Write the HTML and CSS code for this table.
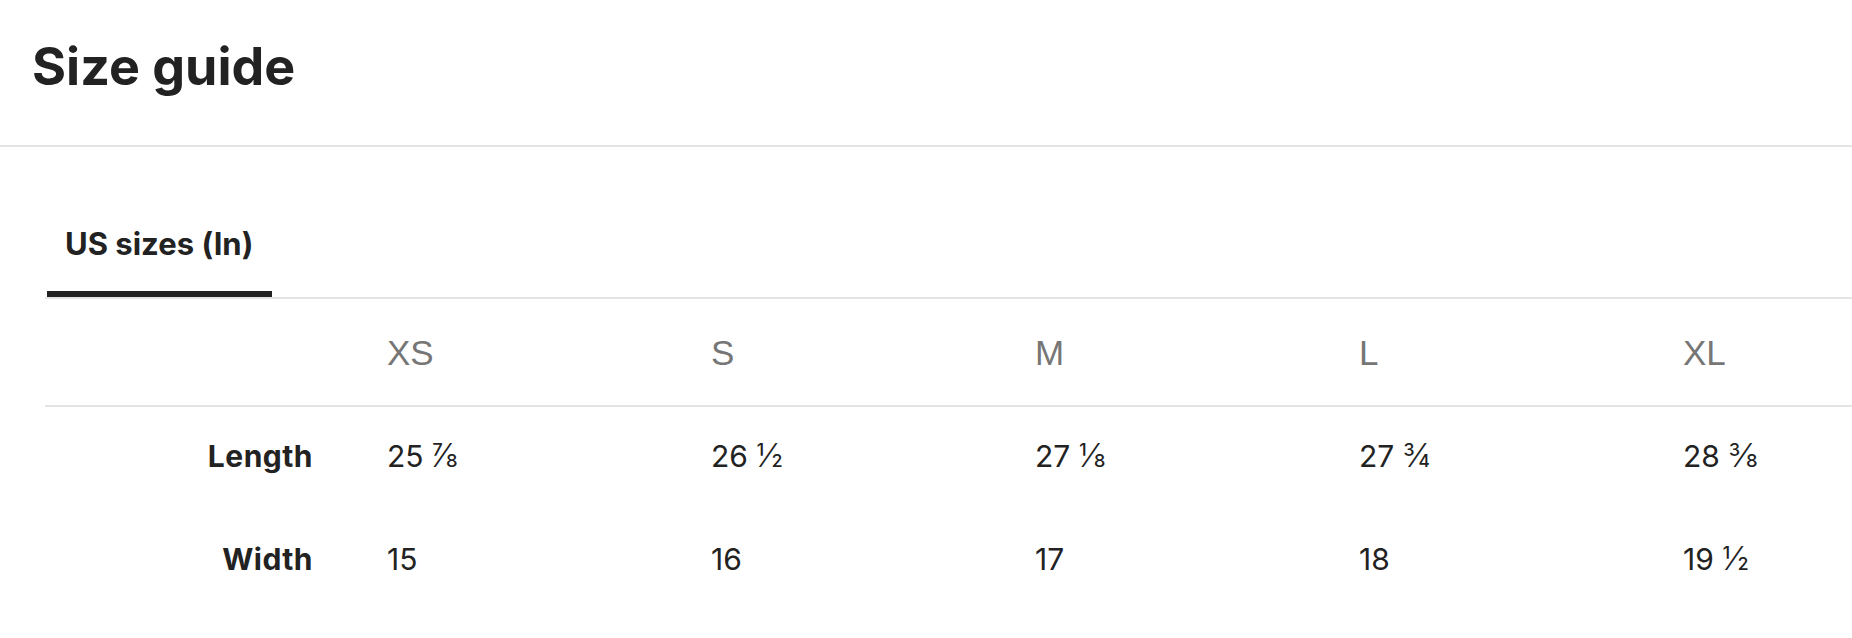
FILE: index.html
```html
<!DOCTYPE html>
<html lang="en">
<head>
<meta charset="utf-8">
<title>Size guide</title>
<link rel="stylesheet" href="styles.css">
</head>
<body>
<header class="guide-header">
  <h1 class="guide-title">Size guide</h1>
</header>
<section class="guide-body">
  <div class="tabs">
    <div class="tab tab-active">US sizes (In)</div>
  </div>
  <div class="table-wrap">
    <table class="size-table">
      <colgroup>
        <col class="col-label">
        <col class="col-size">
        <col class="col-size">
        <col class="col-size">
        <col class="col-size">
        <col class="col-size">
      </colgroup>
      <thead>
        <tr>
          <th class="corner"></th>
          <th>XS</th>
          <th>S</th>
          <th>M</th>
          <th>L</th>
          <th>XL</th>
        </tr>
      </thead>
      <tbody>
        <tr>
          <th class="row-label">Length</th>
          <td>25 <span class="frac">⅞</span></td>
          <td>26 <span class="frac">½</span></td>
          <td>27 <span class="frac">⅛</span></td>
          <td>27 <span class="frac">¾</span></td>
          <td>28 <span class="frac">⅜</span></td>
        </tr>
        <tr>
          <th class="row-label">Width</th>
          <td>15</td>
          <td>16</td>
          <td>17</td>
          <td>18</td>
          <td>19 <span class="frac">½</span></td>
        </tr>
      </tbody>
    </table>
  </div>
</section>
</body>
</html>
```
FILE: styles.css
```css
html, body {
  margin: 0;
  padding: 0;
  background: #ffffff;
  overflow: hidden;
}

body {
  font-family: Inter, "Liberation Sans", sans-serif;
  color: #222222;
}

.guide-header {
  padding: 41px 0 52px 32px;
  border-bottom: 2px solid #e4e4e4;
}

.guide-title {
  margin: 0;
  font-size: 52px;
  line-height: 52px;
  font-weight: 700;
}

.guide-body {
  padding-left: 45px;
}

.tabs {
  display: flex;
  padding-top: 45px;
  border-bottom: 2px solid #e4e4e4;
}

.tab {
  margin-left: 2px;
  padding: 36px 19px 32px 18px;
  font-size: 31px;
  line-height: 31px;
  font-weight: 700;
}

.tab-active {
  border-bottom: 6px solid #222222;
}

.table-wrap {
  overflow: hidden;
}

.size-table {
  border-collapse: collapse;
  table-layout: fixed;
  width: 1925px;
}

.col-label {
  width: 305px;
}

.col-size {
  width: 324px;
}

.size-table thead th {
  padding: 36px 0 35px 37px;
  font-family: "Liberation Sans", Arial, sans-serif;
  font-weight: 400;
  font-size: 35px;
  line-height: 35px;
  color: #767676;
  text-align: left;
  border-bottom: 2px solid #e4e4e4;
}

.size-table thead th.corner {
  padding: 0;
}

.size-table tbody th,
.size-table tbody td {
  padding: 34px 0 39px 37px;
  font-size: 30px;
  line-height: 30px;
  text-align: left;
}

.size-table tbody td {
  font-weight: 400;
}

.frac {
  font-size: 33px;
  font-weight: 300;
  line-height: 0;
}

.size-table tbody th.row-label {
  padding-left: 0;
  padding-right: 37px;
  text-align: right;
  font-weight: 700;
  letter-spacing: 0.5px;
}
```
